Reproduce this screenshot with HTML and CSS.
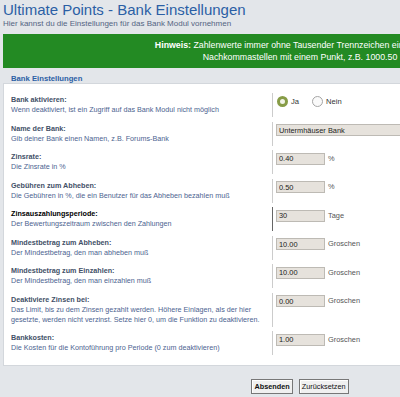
FILE: index.html
```html
<!DOCTYPE html>
<html lang="de">
<head>
  <meta charset="UTF-8" />
  <title>Ultimate Points - Bank Einstellungen</title>
  <link rel="stylesheet" href="styles.css">
</head>
<body>
  <div class="page">
    <h1>Ultimate Points - Bank Einstellungen</h1>
    <p class="intro">Hier kannst du die Einstellungen für das Bank Modul vornehmen</p>

    <div class="notice">
      <b>Hinweis:</b> Zahlenwerte immer ohne Tausender Trennzeichen eingeben und<br>
      Nachkommastellen mit einem Punkt, z.B. 1000.50
    </div>

    <form>
      <div class="legend">Bank Einstellungen</div>
      <div class="panel">
        <dl>
          <dt><label>Bank aktivieren:</label><span>Wenn deaktiviert, ist ein Zugriff auf das Bank Modul nicht möglich</span></dt>
          <dd>
            <span class="radio checked"></span><span class="opt">Ja</span>
            <span class="radio"></span><span class="opt">Nein</span>
          </dd>
        </dl>
        <dl>
          <dt><label>Name der Bank:</label><span>Gib deiner Bank einen Namen, z.B. Forums-Bank</span></dt>
          <dd><input type="text" class="wide" value="Untermhäuser Bank"></dd>
        </dl>
        <dl>
          <dt><label>Zinsrate:</label><span>Die Zinsrate in %</span></dt>
          <dd><input type="text" value="0.40"><span class="unit">%</span></dd>
        </dl>
        <dl>
          <dt><label>Gebühren zum Abheben:</label><span>Die Gebühren in %, die ein Benutzer für das Abheben bezahlen muß</span></dt>
          <dd><input type="text" value="0.50"><span class="unit">%</span></dd>
        </dl>
        <dl class="active">
          <dt><label>Zinsauszahlungsperiode:</label><span>Der Bewertungszeitraum zwischen den Zahlungen</span></dt>
          <dd><input type="text" value="30"><span class="unit">Tage</span></dd>
        </dl>
        <dl>
          <dt><label>Mindestbetrag zum Abheben:</label><span>Der Mindestbetrag, den man abheben muß</span></dt>
          <dd><input type="text" value="10.00"><span class="unit">Groschen</span></dd>
        </dl>
        <dl>
          <dt><label>Mindestbetrag zum Einzahlen:</label><span>Der Mindestbetrag, den man einzahlen muß</span></dt>
          <dd><input type="text" value="10.00"><span class="unit">Groschen</span></dd>
        </dl>
        <dl>
          <dt><label>Deaktiviere Zinsen bei:</label><span>Das Limit, bis zu dem Zinsen gezahlt werden. Höhere Einlagen, als der hier gesetzte, werden nicht verzinst. Setze hier 0, um die Funktion zu deaktivieren.</span></dt>
          <dd><input type="text" value="0.00"><span class="unit">Groschen</span></dd>
        </dl>
        <dl>
          <dt><label>Bankkosten:</label><span>Die Kosten für die Kontoführung pro Periode (0 zum deaktivieren)</span></dt>
          <dd><input type="text" value="1.00"><span class="unit">Groschen</span></dd>
        </dl>
      </div>

      <div class="buttons">
        <button type="button" class="primary">Absenden</button>
        <button type="button">Zurücksetzen</button>
      </div>
    </form>
  </div>
</body>
</html>
```

FILE: styles.css
```css
html, body {
  margin: 0;
}
body {
  background: #e3e6ea;
  font-family: "Liberation Sans", Arial, sans-serif;
  color: #333;
  overflow: hidden;
}
.page {
  width: 594px;
  margin-left: 3px;
}
h1 {
  margin: 0;
  padding-top: 1px;
  font-size: 15px;
  font-weight: normal;
  line-height: 17px;
  color: #2b5fa5;
}
.intro {
  margin: 1px 0 0;
  font-size: 8px;
  line-height: 10px;
  color: #536482;
}
.notice {
  margin-top: 5px;
  padding: 5px 0;
  background: #238a23;
  color: #fff;
  font-size: 8.8px;
  line-height: 12px;
  text-align: center;
}
.legend {
  margin-top: 6px;
  padding-left: 8px;
  font-size: 7.7px;
  font-weight: bold;
  line-height: 9px;
  color: #2b5fa5;
}
.panel {
  background: #fff;
  border: 1px solid #d3d7dc;
  padding: 9px 7px 5.5px;
}
dl {
  display: flex;
  margin: 0 0 4.5px;
}
dt {
  width: 261px;
  padding: 2px 0;
  border-right: 1px solid #ccc;
  font-size: 7.2px;
  line-height: 10px;
}
dt label {
  display: block;
  font-weight: bold;
  color: #425067;
}
dt span {
  display: block;
  color: #4c6390;
}
dl.active dt {
  border-right-color: #666;
}
dl.active dt label {
  color: #000;
}
dd {
  display: flex;
  align-items: center;
  align-self: flex-start;
  margin: 2.5px 0 0 3px;
}
input {
  box-sizing: border-box;
  width: 49px;
  height: 12px;
  margin: 0;
  padding: 0 2px;
  border: 1px solid #bdbab4;
  background: #e6e2dc;
  font-family: "Liberation Sans", Arial, sans-serif;
  font-size: 7.4px;
  color: #222;
}
input.wide {
  width: 200px;
}
.unit {
  margin-left: 3px;
  font-size: 7.4px;
  line-height: 12px;
  color: #555;
}
.radio {
  box-sizing: border-box;
  width: 11px;
  height: 11px;
  margin-left: 1px;
  border: 1px solid #a5a5a5;
  border-radius: 50%;
  background: #fafafa;
}
.radio.checked {
  border: 3px solid #879c47;
  background: #f1f3e6;
}
.opt {
  margin: 0 12px 0 3px;
  font-size: 7.6px;
  line-height: 11px;
  color: #333;
}
.buttons {
  display: flex;
  justify-content: center;
  gap: 6px;
  margin-top: 13px;
}
button {
  height: 15px;
  margin: 0;
  padding: 0 2px;
  border: 1px solid #777;
  background: #f0f0f0;
  box-shadow: inset 1px 1px 0 #fff;
  font-family: "Liberation Sans", Arial, sans-serif;
  font-size: 7.3px;
  color: #111;
}
button.primary {
  font-weight: bold;
}
```
